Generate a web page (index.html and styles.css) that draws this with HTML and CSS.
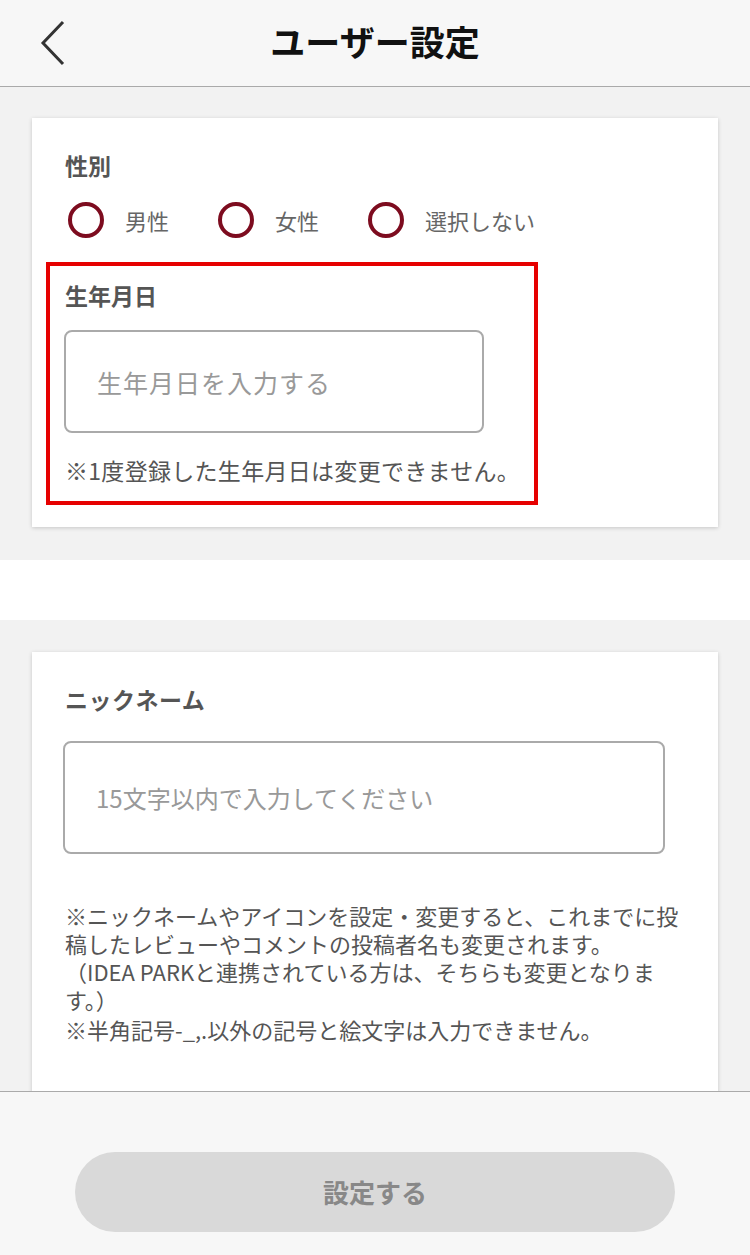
FILE: index.html
```html
<!DOCTYPE html>
<html lang="ja">
<head>
<meta charset="utf-8">
<title>ユーザー設定</title>
<link rel="stylesheet" href="styles.css">
</head>
<body>
<header class="topbar">
  <div class="back">
    <svg width="26" height="46" viewBox="0 0 26 46"><polyline points="23,2 3,23 23,44" fill="none" stroke="#333" stroke-width="3"/></svg>
  </div>
  <h1 class="title">ユーザー設定</h1>
  <div></div>
</header>

<main class="content">
  <section class="card card-first">
    <div class="label">性別</div>
    <div class="radios">
      <label class="radio"><span class="circle"></span><span>男性</span></label>
      <label class="radio"><span class="circle"></span><span>女性</span></label>
      <label class="radio"><span class="circle"></span><span>選択しない</span></label>
    </div>
    <div class="highlight">
      <div class="label">生年月日</div>
      <div class="input input-birth">生年月日を入力する</div>
      <p class="note note-birth">※1度登録した生年月日は変更できません。</p>
    </div>
  </section>

  <div class="band"></div>

  <section class="card card-second">
    <div class="label label-nick">ニックネーム</div>
    <div class="input input-nick">15文字以内で入力してください</div>
    <p class="note note-nick">※ニックネームやアイコンを設定・変更すると、これまでに投稿したレビューやコメントの投稿者名も変更されます。<br>（IDEA PARKと連携されている方は、そちらも変更となります。）</p>
    <p class="note note-nick note-last">※半角記号-_,.以外の記号と絵文字は入力できません。</p>
  </section>
</main>

<footer class="bottombar">
  <button class="submit" type="button">設定する</button>
</footer>
</body>
</html>
```

FILE: styles.css
```css
* { box-sizing: border-box; }
html, body { margin: 0; padding: 0; }
body {
  background: #f2f2f2;
  font-family: "Noto Sans CJK JP", "Noto Sans", sans-serif;
  color: #555;
  height: 1255px;
  overflow: hidden;
}
.topbar {
  height: 87px;
  background: #f7f7f7;
  border-bottom: 1px solid #aaa;
  display: grid;
  grid-template-columns: 1fr auto 1fr;
  align-items: center;
}
.back { padding-left: 40px; display: flex; align-items: center; height: 86px; }
.back svg { display: block; }
.title {
  margin: 0 0 4px;
  font-size: 35px;
  font-weight: 700;
  color: #111;
  line-height: 40px;
}
.content { padding-top: 31px; }
.card {
  background: #fff;
  margin: 0 32px;
  box-shadow: 0 1px 4px rgba(0,0,0,0.18);
  padding: 32px 33px 22px 33px;
}
.label {
  font-size: 23px;
  font-weight: 700;
  line-height: 30px;
  color: #555;
}
.label-nick { letter-spacing: 0.5px; }
.radios {
  display: grid;
  grid-template-columns: 150px 150px auto;
  margin-top: 22px;
  margin-left: 3px;
}
.radio {
  display: flex;
  align-items: center;
  font-size: 22px;
  color: #666;
  line-height: 36px;
}
.circle {
  width: 36px;
  height: 36px;
  border: 4px solid #7d0c1f;
  border-radius: 50%;
  margin-right: 21px;
}
.highlight {
  width: 492px;
  margin-left: -19px;
  margin-top: 24px;
  border: 4px solid #e60000;
  padding: 14px 15px 16px 15px;
}
.input {
  border: 2px solid #aaa;
  border-radius: 8px;
  color: #999;
  font-size: 24px;
  display: flex;
  align-items: center;
  padding-left: 31px;
}
.input-birth {
  margin-top: 20px;
  width: 420px;
  height: 103px;
  margin-left: -1px;
  font-size: 25px;
  letter-spacing: 1px;
}
.note { margin: 0; }
.note-birth {
  margin-top: 22px;
  font-size: 23px;
  letter-spacing: 0.3px;
  line-height: 30px;
  color: #555;
  white-space: nowrap;
}
.band { height: 60px; background: #fff; margin: 33px 0 32px; }
.card-second { padding-bottom: 120px; }
.input-nick { margin-top: 27px; width: 602px; height: 113px; margin-left: -2px; }
.note-nick {
  margin-top: 47px;
  font-size: 22px;
  line-height: 28px;
  color: #555;
}
.note-nick.note-last { margin-top: 2px; }
.bottombar {
  position: fixed;
  left: 0; right: 0; bottom: 0;
  height: 164px;
  background: #f7f7f7;
  border-top: 1px solid #aaa;
  display: flex;
  justify-content: center;
  padding-top: 60px;
}
.submit {
  width: 600px;
  height: 80px;
  border: none;
  border-radius: 40px;
  background: #d9d9d9;
  color: #888;
  font-family: "Noto Sans CJK JP", sans-serif;
  font-size: 26px;
  font-weight: 700;
  padding-bottom: 3px;
}
```
